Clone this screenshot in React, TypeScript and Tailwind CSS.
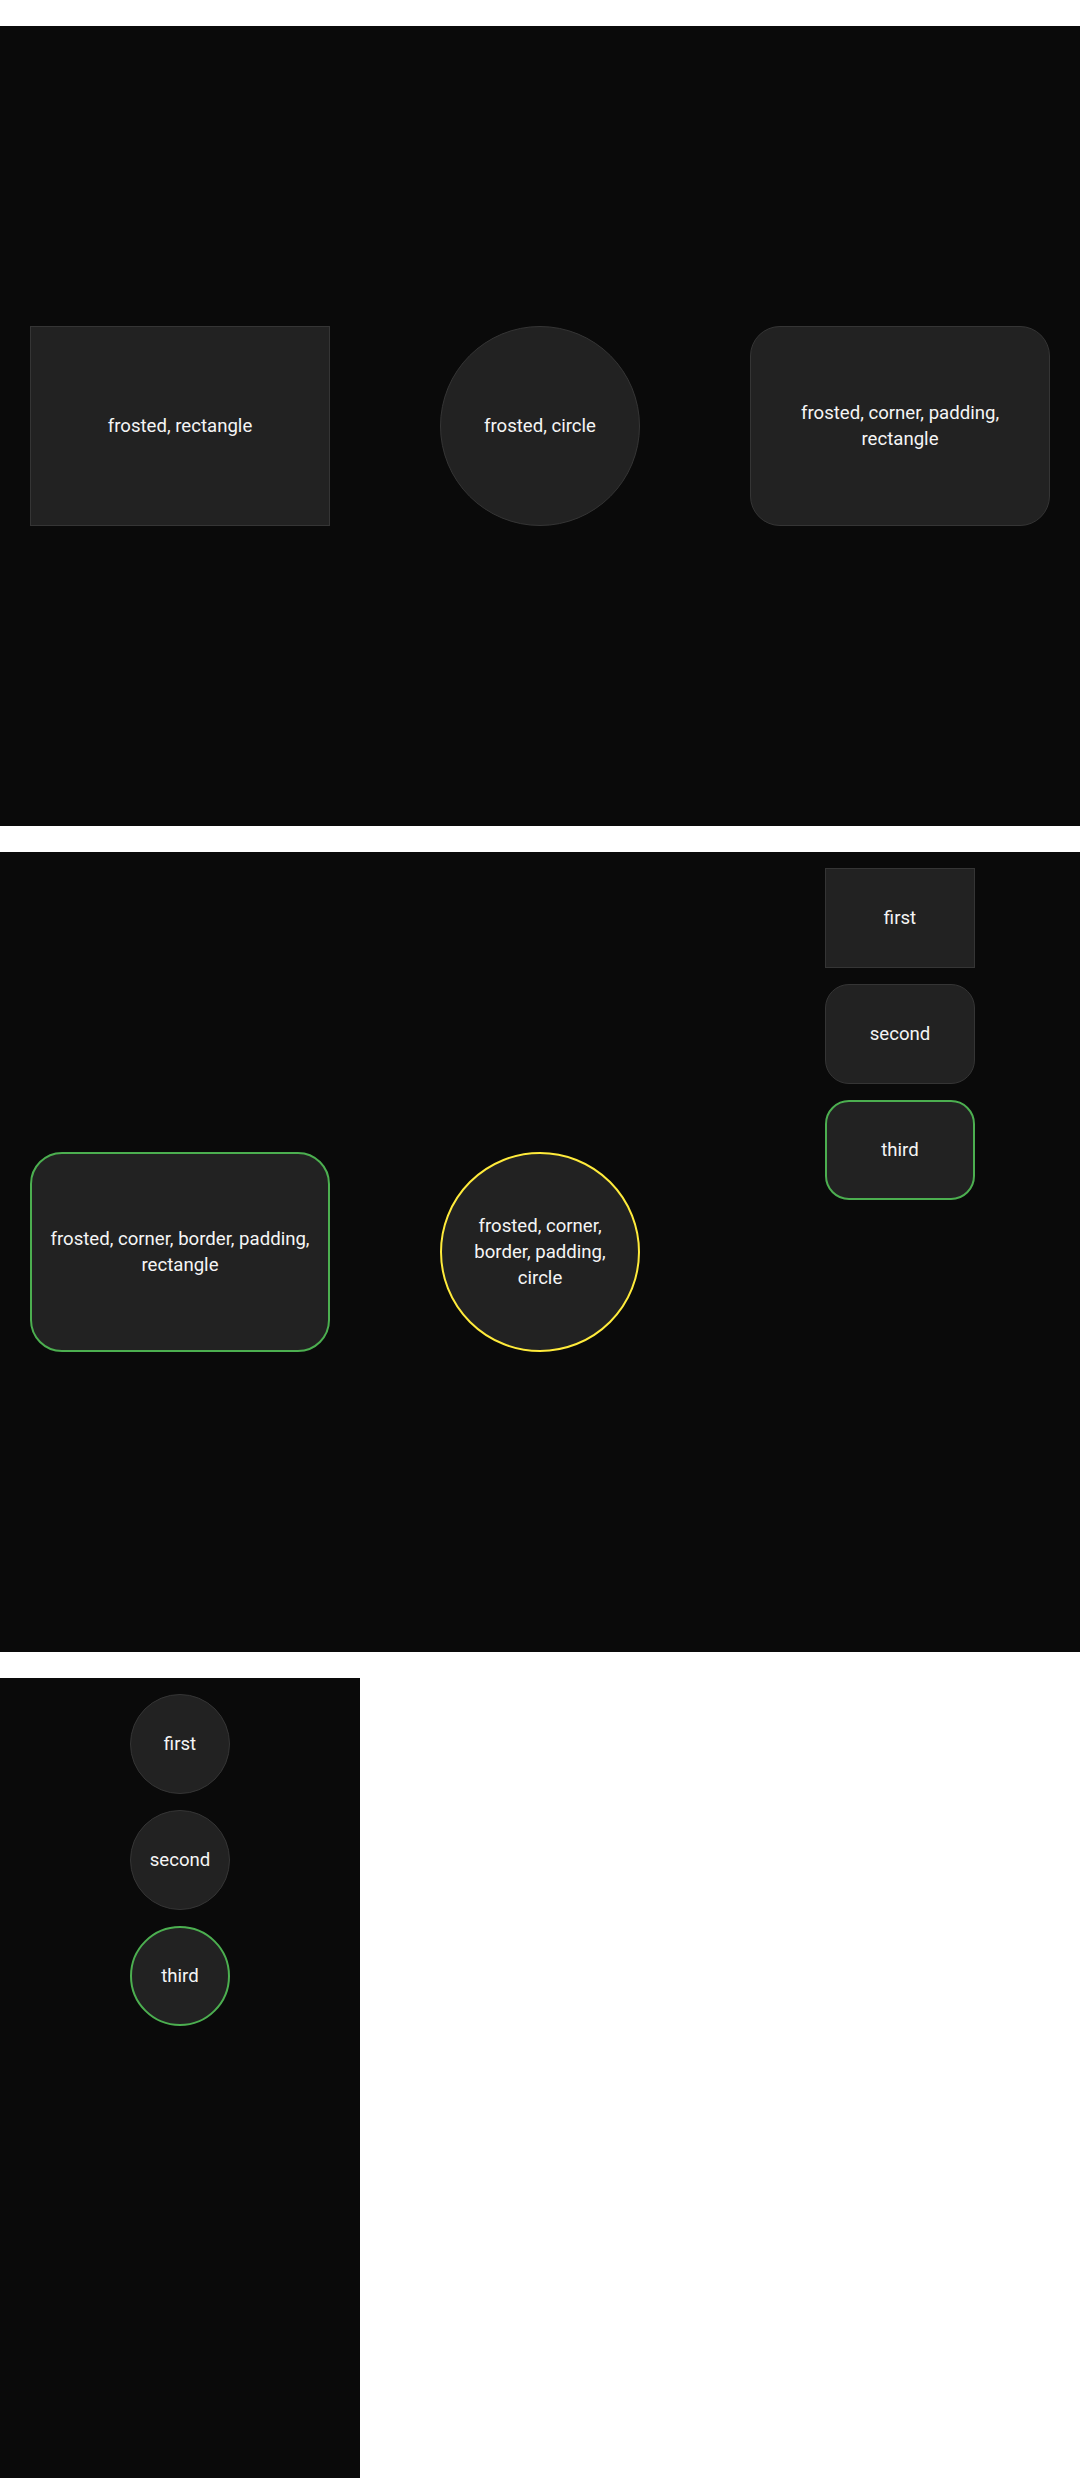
import React from 'react';

type Shape = 'rect' | 'round' | 'circle';

interface FrostedProps {
  label: string;
  shape: Shape;
  size: string;
  border?: 'green' | 'yellow';
  padded?: boolean;
  radius?: string;
}

const Frosted: React.FC<FrostedProps> = ({ label, shape, size, border, padded, radius }) => {
  const shapeCls =
    shape === 'circle' ? 'rounded-full' : shape === 'round' ? radius || 'rounded-[30px]' : '';
  const borderCls =
    border === 'green'
      ? 'border-2 border-[#4caf50]'
      : border === 'yellow'
        ? 'border-2 border-[#ffeb3b]'
        : 'border border-[#353535]';

  return (
    <div
      className={`${size} ${shapeCls} ${borderCls} ${padded ? 'p-4' : ''} shrink-0 flex items-center justify-center bg-[#222222] text-center text-[18.6px] leading-[26px] text-[#f5f5f5]`}
    >
      {label}
    </div>
  );
};

export default function App() {
  return (
    <div
      className="flex flex-col gap-[26px] bg-white pt-[26px]"
      style={{ fontFamily: 'Roboto, "Noto Sans", sans-serif' }}
    >
      {/* Первый экран */}
      <section className="h-[800px] bg-[#0a0a0a] flex items-center justify-between px-[30px]">
        <Frosted label="frosted, rectangle" shape="rect" size="w-[300px] h-[200px]" />
        <Frosted label="frosted, circle" shape="circle" size="w-[200px] h-[200px]" />
        <Frosted
          label="frosted, corner, padding, rectangle"
          shape="round"
          size="w-[300px] h-[200px]"
          padded
        />
      </section>

      {/* Второй экран */}
      <section className="h-[800px] bg-[#0a0a0a] flex items-center justify-between px-[30px]">
        <Frosted
          label="frosted, corner, border, padding, rectangle"
          shape="round"
          size="w-[300px] h-[200px]"
          border="green"
          padded
          radius="rounded-[32px]"
        />
        <Frosted
          label="frosted, corner, border, padding, circle"
          shape="circle"
          size="w-[200px] h-[200px]"
          border="yellow"
          padded
        />
        <div className="w-[300px] self-stretch flex flex-col items-center gap-4 pt-4">
          <Frosted label="first" shape="rect" size="w-[150px] h-[100px]" />
          <Frosted label="second" shape="round" size="w-[150px] h-[100px]" radius="rounded-[24px]" />
          <Frosted
            label="third"
            shape="round"
            size="w-[150px] h-[100px]"
            border="green"
            radius="rounded-[24px]"
          />
        </div>
      </section>

      {/* Третий экран */}
      <section className="w-[360px] h-[800px] bg-[#0a0a0a] flex flex-col items-center gap-4 pt-4">
        <Frosted label="first" shape="circle" size="w-[100px] h-[100px]" />
        <Frosted label="second" shape="circle" size="w-[100px] h-[100px]" />
        <Frosted label="third" shape="circle" size="w-[100px] h-[100px]" border="green" />
      </section>
    </div>
  );
}
